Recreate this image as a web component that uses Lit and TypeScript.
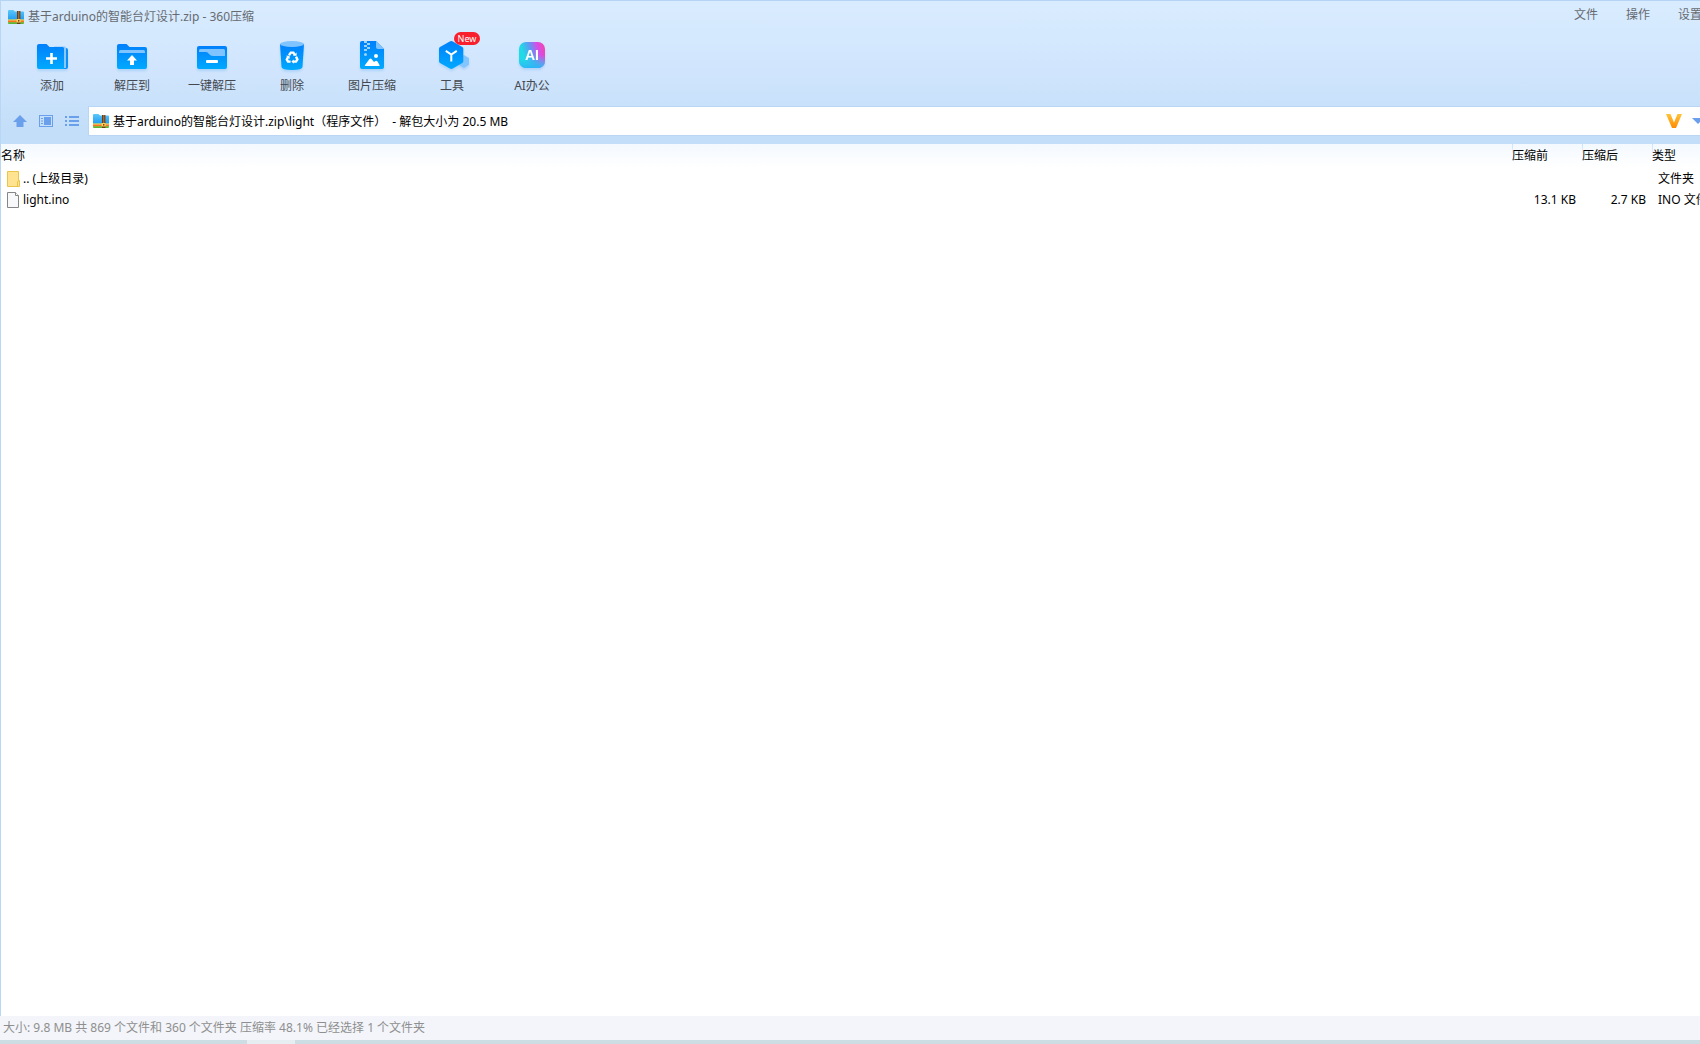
import { LitElement, html, css, svg } from "lit";
import { customElement, property } from "lit/decorators.js";

const archiveIcon = html`<svg class="archive" width="16" height="14" viewBox="0 0 16 14" aria-hidden="true">
  <defs>
    <linearGradient id="ar" x1="0" y1="0" x2="0" y2="1">
      <stop offset="0" stop-color="#5cc8fb" /><stop offset="1" stop-color="#1f9bf0" />
    </linearGradient>
  </defs>
  <path d="M0 1.2Q0 0 1 0H5.4L7 1.6H15Q16 1.6 16 2.6V10H0Z" fill="url(#ar)" />
  <rect y="9.4" width="16" height="1.2" fill="#f3e04a" />
  <rect y="10.4" width="16" height="2.2" fill="#f5781e" />
  <path d="M0 12.2H16V13Q16 14 15 14H1Q0 14 0 13Z" fill="#5cb531" />
  <rect x="9" y="1" width="3.4" height="13" fill="#6e3d1a" />
  <path d="M10.700 1.600V9" stroke="#e8a64c" stroke-width="1.200" stroke-dasharray="1 1" />
  <rect x="8.6" y="9" width="4.2" height="3.600" rx=".8" fill="#ffd45a" />
  <rect x="10" y="10" width="1.4" height="1.6" fill="#7a4218" />
</svg>`;

const blue = svg`<defs><linearGradient id="b" x1="0" y1="0" x2="0" y2="1">
  <stop offset="0" stop-color="#0080fb" /><stop offset="1" stop-color="#00a9fe" /></linearGradient></defs>`;

const icons: Record<string, unknown> = {
  add: svg`${blue}
    <path d="M14 7H30Q32 7 32 9V26Q32 28 30 28H14Z" fill="#0a8ffb" />
    <path d="M18 5.500H28.500Q30 5.500 30 7V27H18Z" fill="#8ac8ff" />
    <path d="M1 5Q1 3 3 3H10.500L13.500 6H26.500Q28 6 28 7.500V28H3Q1 28 1 26Z" fill="url(#b)" />
    <path d="M15.500 12V23M10 17.500H21" stroke="#fff" stroke-width="2.600" />`,
  extract: svg`${blue}
    <path d="M1 5Q1 3 3 3H10.500L13.500 6H29Q31 6 31 8V26Q31 28 29 28H3Q1 28 1 26Z" fill="url(#b)" />
    <path d="M3 10.500Q3 9 4.500 9H27.500Q29 9 29 10.500V12H3Z" fill="#80c4ff" />
    <path d="M16 14L21 19.500H18V24H14V19.500H11Z" fill="#fff" />`,
  quick: svg`${blue}
    <rect x="1" y="5" width="30" height="23" rx="2" fill="url(#b)" />
    <path d="M3 9.500Q3 8 4.500 8H27.500Q29 8 29 9.500V15H17Q14.500 15 13 13Q11.800 11 10 11H3Z" fill="#80c4ff" />
    <rect x="10" y="19" width="12" height="3" rx="1" fill="#fff" />`,
  remove: svg`${blue}
    <path d="M4 3H28L26.500 26Q26 29 16 29Q6 29 5.500 26Z" fill="url(#b)" />
    <ellipse cx="16" cy="3" rx="12" ry="3" fill="#80c4ff" />
    <g fill="none" stroke="#fff" stroke-width="2.400">
      <path d="M13 14.200L14.800 11.600H17.400L18.800 14" />
      <path d="M20 15.600L21.400 18.400L20 20.600H17.200" />
      <path d="M14.600 20.600H12L10.800 18.400L12.200 15.800" />
    </g>
    <path d="M17 14.800H20.600V11.600ZM17.800 18.400V22.800L15.400 20.600ZM10 14.800H13.600V18Z" fill="#fff" />`,
  image: svg`${blue}
    <path d="M4 2Q4 0 6 0H20L28 8V26Q28 28 26 28H6Q4 28 4 26Z" fill="url(#b)" />
    <path d="M20 0L28 8H22Q20 8 20 6Z" fill="#80c4ff" />
    <path d="M8 0h3v2h-3zM11 2h3v2h-3zM8 4h3v2h-3zM11 6h3v2h-3zM8 8h3v2h-3z" fill="#9fd3ff" />
    <circle cx="9.500" cy="13.500" r="1.500" fill="#9fd3ff" />
    <circle cx="20" cy="15" r="2" fill="#fff" />
    <path d="M9 25Q8.500 25 9 24L13.500 18Q14.500 17 15.500 18L18 21L19.500 20Q20.500 19.500 21.500 20.500L23.500 24Q24 25 23 25Z" fill="#fff" />`,
  tools: svg`${blue}
    <path d="M28 14L33 17V23.500L28 27L22 23.500V17Z" fill="#83c5ff" />
    <path d="M13.800 .5Q15.300 -.3 16.800 .5L26.300 6Q27.300 6.600 27.300 8V20Q27.300 21.400 26.300 22L16.800 27.500Q15.300 28.300 13.800 27.500L4 22Q3 21.400 3 20V8Q3 6.600 4 6Z" fill="url(#b)" />
    <path d="M9.800 9.800L15.300 13.500L20.800 9.800M15.300 13V20.500" stroke="#fff" stroke-width="2" fill="none" />`,
  ai: svg`<defs>
      <linearGradient id="a1" x1="0" y1=".3" x2="1" y2="0">
        <stop offset=".1" stop-color="#1fdbe6" /><stop offset=".4" stop-color="#5a9cf3" />
        <stop offset=".7" stop-color="#d94be8" /><stop offset="1" stop-color="#f5479c" />
      </linearGradient>
      <linearGradient id="a2" x1="0" y1="0" x2="0" y2="1">
        <stop offset=".5" stop-color="#27d6ea" stop-opacity="0" /><stop offset="1" stop-color="#2bb5f6" />
      </linearGradient>
    </defs>
    <rect x="3" y="1" width="26" height="26" rx="7" fill="url(#a1)" />
    <rect x="3" y="1" width="26" height="26" rx="7" fill="url(#a2)" />
    <text class="ai" x="16" y="19" text-anchor="middle">AI</text>`,
};

@customElement("tool-button")
class ToolButton extends LitElement {
  @property() icon = "";
  @property() label = "";
  @property() badge = "";
  static styles = css`
    :host { display: block; flex: 0 0 80px; }
    button {
      position: relative; width: 100%; border: 0; padding: 0; background: none; color: #45494f;
      display: flex; flex-direction: column; align-items: center; gap: 8px;
      font: 12px/18px "Noto Sans", "Noto Sans CJK SC", sans-serif; white-space: nowrap;
    }
    svg { display: block; overflow: visible; filter: drop-shadow(0 2px 1px #4a9cf040); }
    .ai { font: bold 14px "Liberation Sans", sans-serif; fill: #fff; }
    .badge {
      position: absolute; left: 42px; top: -9px; width: 26px; height: 13px; border-radius: 7px;
      background: #f8202c; color: #fff; font-size: 9px; line-height: 13px; text-align: center;
    }
  `;
  render() {
    return html`<button type="button">
      <svg width="32" height="28" viewBox="0 0 32 28" aria-hidden="true">${icons[this.icon]}</svg>
      ${this.badge ? html`<span class="badge">${this.badge}</span>` : ""}
      <span>${this.label}</span>
    </button>`;
  }
}

const tools = [
  ["add", "添加", ""],
  ["extract", "解压到", ""],
  ["quick", "一键解压", ""],
  ["remove", "删除", ""],
  ["image", "图片压缩", ""],
  ["tools", "工具", "New"],
  ["ai", "AI办公", ""],
];

const folderIcon = html`<svg width="13" height="16" viewBox="0 0 13 16" aria-hidden="true">
  <path d="M.5 .5H11.500V9.500H12.500V15.500H.5Z" fill="#ffe390" stroke="#eac54b" />
  <path d="M10.500 15V10.500L12 9.500" fill="none" stroke="#eac54b" />
</svg>`;
const fileIcon = html`<svg width="13" height="16" viewBox="0 0 13 16" aria-hidden="true">
  <path d="M.5 .5H8.500L11.500 3.500V15.500H.5Z" fill="#f7f8f9" stroke="#858585" />
  <path d="M8.500 .5V3.500H11.500" fill="#fff" stroke="#858585" />
</svg>`;

const rows = [
  { icon: folderIcon, name: ".. (上级目录)", before: "", after: "", type: "文件夹" },
  { icon: fileIcon, name: "light.ino", before: "13.1 KB", after: "2.7 KB", type: "INO 文件" },
];

@customElement("app-root")
class AppRoot extends LitElement {
  static styles = css`
    :host {
      display: block; color: #000;
      font: 12px/18px "Noto Sans", "Noto Sans CJK SC", sans-serif;
    }
    * { box-sizing: border-box; }
    button, input { font: inherit; color: inherit; border: 0; padding: 0; background: none; text-align: left; }
    .window { display: flex; flex-direction: column; min-height: 100vh; overflow: hidden; }
    .chrome {
      background: linear-gradient(#d9ecff, #d0e5fd 50%, #c3def9 90%);
      border-top: 1px solid #b5d3f2; border-left: 1px solid #b9d6f4;
    }
    .titlebar { display: flex; height: 32px; color: #666a70; }
    .title { display: flex; align-items: center; gap: 4px; padding-left: 7px; margin: 0; font: inherit; }
    .menu { display: flex; align-items: flex-start; margin-left: auto; width: 126px; padding-top: 5px; overflow: hidden; }
    .menu button { flex: 0 0 52px; }
    .tools { display: flex; padding: 8px 0 11px 11px; }
    .nav { display: flex; align-items: center; padding-bottom: 8px; }
    .nav-buttons { display: flex; gap: 12px; padding: 0 9px 0 12px; }
    .nav-buttons button { display: block; height: 14px; }
    svg { display: block; flex: none; }
    .address {
      flex: 1; min-width: 0; display: flex; align-items: center; height: 30px; padding-left: 4px;
      background: #fff; border: solid #b9d6f4; border-width: 1px 0 1px 1px; overflow: hidden;
    }
    .address input { flex: 1; min-width: 0; height: 20px; padding-left: 4px; outline: 0; }
    .vip { margin-right: 10px; }
    .drop { width: 8px; overflow: hidden; }
    .files { flex: 1; background: #fff; border-left: 1px solid #b9d6f4; }
    table { width: 100%; table-layout: fixed; border-collapse: collapse; }
    th, td { padding: 0; white-space: nowrap; overflow: hidden; text-align: left; font-weight: 400; }
    thead tr { height: 24px; background: linear-gradient(#f3f9ff, #fff); }
    th + th { background: linear-gradient(#c9e2fa, #e6f2fe) no-repeat 0 0 / 1px 9px; }
    .size { width: 70px; }
    .type { width: 48px; }
    tbody tr { height: 21px; }
    .num { text-align: right; padding-right: 6px; }
    .kind { padding-left: 6px; }
    .name { display: flex; align-items: center; gap: 3px; padding-left: 6px; }
    .status { background: #f3f5fa; color: #8f8f8f; padding: 3px; }
    .edge { height: 4px; background: linear-gradient(90deg, #cddde4 247px, #e6eef1 247px 295px, #cddde4 295px); }
  `;
  render() {
    return html`<div class="window">
      <header class="chrome">
        <div class="titlebar">
          <h1 class="title">${archiveIcon}<span>基于arduino的智能台灯设计.zip - 360压缩</span></h1>
          <nav class="menu">
            ${["文件", "操作", "设置"].map((m) => html`<button type="button">${m}</button>`)}
          </nav>
        </div>
        <div class="tools">
          ${tools.map(([i, l, b]) => html`<tool-button icon=${i} label=${l} badge=${b}></tool-button>`)}
        </div>
        <div class="nav">
          <div class="nav-buttons">
            <button type="button" aria-label="上级目录">
              <svg width="14" height="14" viewBox="0 0 14 14"><path d="M7 1L14 8H10.500V13H3.500V8H0Z" fill="#6a9fec" /></svg>
            </button>
            <button type="button" aria-label="视图">
              <svg width="14" height="14" viewBox="0 0 14 14">
                <rect x=".5" y="1.500" width="13" height="11" fill="none" stroke="#6a9fec" />
                <path d="M2 4h2v1H2zM2 6.500h2v1H2zM2 9h2v1H2zM5 3h7v8H5z" fill="#6a9fec" />
              </svg>
            </button>
            <button type="button" aria-label="列表">
              <svg width="14" height="14" viewBox="0 0 14 14">
                <path d="M0 2h2v2H0zM4 2h10v2H4zM0 6h2v2H0zM4 6h10v2H4zM0 10h2v2H0zM4 10h10v2H4z" fill="#6a9fec" />
              </svg>
            </button>
          </div>
          <div class="address">
            ${archiveIcon}
            <input aria-label="路径" .value=${"基于arduino的智能台灯设计.zip\\light（程序文件）  - 解包大小为 20.5 MB"} />
            <button class="vip" type="button" aria-label="会员">
              <svg width="16" height="14" viewBox="0 0 16 14">
                <defs><linearGradient id="v" x1="0" y1="0" x2="0" y2="1"><stop offset="0" stop-color="#ffc53a" /><stop offset="1" stop-color="#ff8a00" /></linearGradient></defs>
                <path d="M0 0H4.500L8 8.500L11.500 0H16L10 14H6Z" fill="url(#v)" />
              </svg>
            </button>
            <button class="drop" type="button" aria-label="展开">
              <svg width="12" height="6" viewBox="0 0 12 6"><path d="M0 0H12L6 6Z" fill="#6a9fec" /></svg>
            </button>
          </div>
        </div>
      </header>
      <main class="files">
        <table>
          <thead>
            <tr><th>名称</th><th class="size">压缩前</th><th class="size">压缩后</th><th class="type">类型</th></tr>
          </thead>
          <tbody>
            ${rows.map((r) => html`<tr>
              <td><div class="name">${r.icon}<span>${r.name}</span></div></td>
              <td class="num">${r.before}</td><td class="num">${r.after}</td><td class="kind">${r.type}</td>
            </tr>`)}
          </tbody>
        </table>
      </main>
      <footer class="status">大小: 9.8 MB 共 869 个文件和 360 个文件夹 压缩率 48.1% 已经选择 1 个文件夹</footer>
      <div class="edge"></div>
    </div>`;
  }
}
